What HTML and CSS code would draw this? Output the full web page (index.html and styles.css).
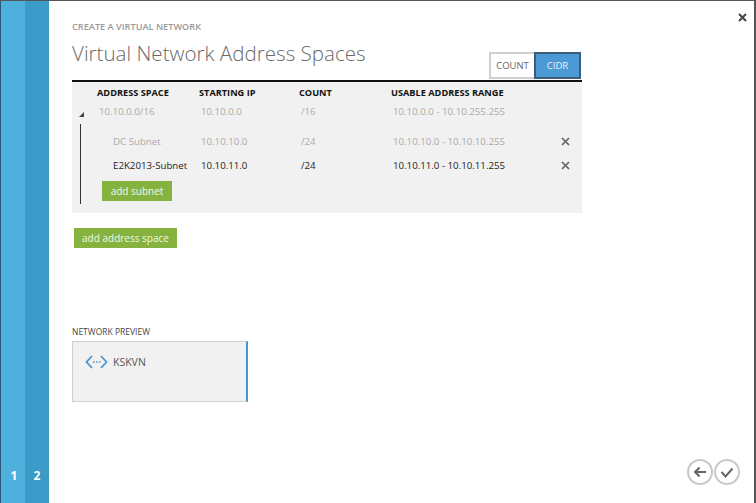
FILE: index.html
```html
<!DOCTYPE html>
<html lang="en">
<head>
<meta charset="utf-8">
<title>Virtual Network Address Spaces</title>
<link rel="stylesheet" href="styles.css">
</head>
<body>
<div class="dialog">
  <nav class="steps">
    <div class="step step-one"><span>1</span></div>
    <div class="step step-two"><span>2</span></div>
  </nav>
  <main class="content">
    <button class="close" aria-label="Close">
      <svg width="9" height="9" viewBox="0 0 9 9"><path d="M1 1l7 7M8 1L1 8" stroke="#444" stroke-width="2"/></svg>
    </button>
    <div class="eyebrow">CREATE A VIRTUAL NETWORK</div>
    <div class="title-row">
      <h1>Virtual Network Address Spaces</h1>
      <div class="toggle">
        <div class="toggle-count">COUNT</div>
        <div class="toggle-cidr">CIDR</div>
      </div>
    </div>
    <section class="table">
      <div class="row head">
        <div class="c-arrow"></div>
        <div>ADDRESS SPACE</div>
        <div>STARTING IP</div>
        <div>COUNT</div>
        <div>USABLE ADDRESS RANGE</div>
      </div>
      <div class="row muted space">
        <div class="c-arrow"><i class="arrow"></i></div>
        <div class="shift">10.10.0.0/16</div>
        <div class="shift">10.10.0.0</div>
        <div class="shift">/16</div>
        <div class="shift">10.10.0.0 - 10.10.255.255</div>
      </div>
      <div class="subnets">
        <div class="row muted sub">
          <div class="sub-name">DC Subnet</div>
          <div class="shift">10.10.10.0</div>
          <div class="shift">/24</div>
          <div class="shift range">10.10.10.0 - 10.10.10.255</div>
          <svg class="del" width="9" height="9" viewBox="0 0 9 9"><path d="M1 1l7 7M8 1L1 8" stroke="#666" stroke-width="1.7"/></svg>
        </div>
        <div class="row sub">
          <div class="sub-name">E2K2013-Subnet</div>
          <div class="shift">10.10.11.0</div>
          <div class="shift">/24</div>
          <div class="shift range">10.10.11.0 - 10.10.11.255</div>
          <svg class="del" width="9" height="9" viewBox="0 0 9 9"><path d="M1 1l7 7M8 1L1 8" stroke="#666" stroke-width="1.7"/></svg>
        </div>
        <button class="btn btn-subnet">add subnet</button>
      </div>
    </section>
    <button class="btn btn-space">add address space</button>
    <div class="preview-label">NETWORK PREVIEW</div>
    <div class="preview">
      <svg width="23" height="14" viewBox="0 0 23 14" fill="none"><path d="M7 1L1.5 7 7 13M16 1l5.500 6L16 13" stroke="#4a96cc" stroke-width="1.800"/><path d="M8 7h1.500M11 7h1.500M14 7h1.500" stroke="#4a96cc" stroke-width="1.300"/></svg>
      <span>KSKVN</span>
    </div>
    <div class="nav">
      <div class="circle">
        <svg width="14" height="12" viewBox="0 0 14 12" fill="none"><path d="M6.500 1.500L2 6l4.500 4.500M2 6h11" stroke="#666" stroke-width="2"/></svg>
      </div>
      <div class="circle">
        <svg width="14" height="11" viewBox="0 0 14 11" fill="none"><path d="M1.500 5l4 4.500L12.500 1.500" stroke="#666" stroke-width="2"/></svg>
      </div>
    </div>
  </main>
</div>
</body>
</html>
```
FILE: styles.css
```css
* { box-sizing: border-box; }
html, body { margin: 0; padding: 0; }
body {
  width: 756px;
  height: 503px;
  overflow: hidden;
  font-family: "Open Sans", "Noto Sans", sans-serif;
  background: #fff;
}
.dialog {
  display: flex;
  width: 756px;
  height: 503px;
  border-top: 1px solid #555;
  border-right: 2px solid #555;
  border-left: 1px solid #2a5a78;
}
.steps { display: flex; width: 48px; flex: none; }
.step {
  width: 24px;
  display: flex;
  align-items: flex-end;
  justify-content: center;
  padding-bottom: 19px;
  color: #fff;
  font-size: 12px;
  font-weight: 700;
  line-height: 16px;
}
.step-one { background: #4eb0dc; padding-left: 2px; }
.step-two { background: #3a9bc8; }
.content {
  position: relative;
  flex: 1;
  padding: 19px 0 0 23px;
}
.close {
  position: absolute;
  top: 12px;
  right: 7px;
  width: 9px;
  height: 9px;
  padding: 0;
  border: 0;
  background: none;
  display: flex;
}
.eyebrow {
  font-size: 9.2px;
  line-height: 13px;
  font-weight: 600;
  color: #9a9a9a;
}
.title-row {
  display: flex;
  justify-content: space-between;
  align-items: flex-end;
  width: 510px;
  height: 47px;
}
h1 {
  margin: 0 0 12px;
  font-size: 20.6px;
  line-height: 30px;
  font-weight: 300;
  color: #6a6a6a;
  white-space: nowrap;
}
.toggle {
  display: flex;
  width: 92px;
  height: 27px;
  margin-right: 1px;
  margin-bottom: 1px;
  font-size: 9.5px;
  text-align: center;
  line-height: 23px;
}
.toggle-count {
  flex: 1;
  border: 2px solid #d0d0d0;
  border-right: 0;
  color: #666;
}
.toggle-cidr {
  width: 47px;
  border: 2px solid #3d5c78;
  background: #4b9ad6;
  color: #e8f2fa;
}
.table {
  width: 510px;
  height: 133px;
  border-top: 2px solid #111;
  background: #f1f1f1;
  position: relative;
}
.row {
  display: grid;
  grid-template-columns: 25px 102px 100px 92px 1fr;
  align-items: center;
  font-size: 9.700px;
  color: #222;
}
.head {
  height: 20px;
  font-size: 9.200px;
  font-weight: 700;
  color: #111;
}
.space { height: 18px; }
.muted { color: #aaa; }
.shift { padding-left: 2px; }
.c-arrow { display: flex; align-items: flex-end; height: 100%; }
.arrow {
  width: 0;
  height: 0;
  margin: 0 0 3px 7px;
  border-style: solid;
  border-width: 0 0 5px 5px;
  border-color: transparent transparent #444 transparent;
}
.subnets {
  position: relative;
  margin: 4px 0 0 8px;
  height: 80px;
  border-left: 1px solid #333;
  padding-top: 5px;
}
.sub {
  height: 24px;
  padding-left: 32px;
  width: 502px;
  grid-template-columns: 86px 100px 92px 170px 9px;
}
.sub-name { white-space: nowrap; }
.del { display: block; }
.btn {
  display: block;
  border: 0;
  padding: 0;
  background: #86b340;
  color: #f2f7e8;
  font-family: inherit;
  font-size: 10px;
  text-align: center;
}
.btn-subnet {
  width: 70px;
  height: 20px;
  margin: 4px 0 0 21px;
}
.btn-space {
  width: 103px;
  height: 20px;
  margin: 15px 0 0 2px;
}
.preview-label {
  margin-top: 78px;
  font-size: 8.500px;
  line-height: 12px;
  color: #444;
}
.preview {
  display: flex;
  align-items: center;
  gap: 5px;
  width: 176px;
  height: 61px;
  margin-top: 3px;
  padding: 0 0 19px 12px;
  background: #f1f1f1;
  border: 1px solid #cfcfcf;
  border-right: 2px solid #4a96cc;
  font-size: 10.500px;
  color: #555;
}
.nav {
  position: absolute;
  right: 14px;
  bottom: 18px;
  display: flex;
  gap: 1px;
}
.circle {
  width: 26px;
  height: 26px;
  border: 2px solid #c8c8c8;
  border-radius: 50%;
  display: flex;
  align-items: center;
  justify-content: center;
}
```
